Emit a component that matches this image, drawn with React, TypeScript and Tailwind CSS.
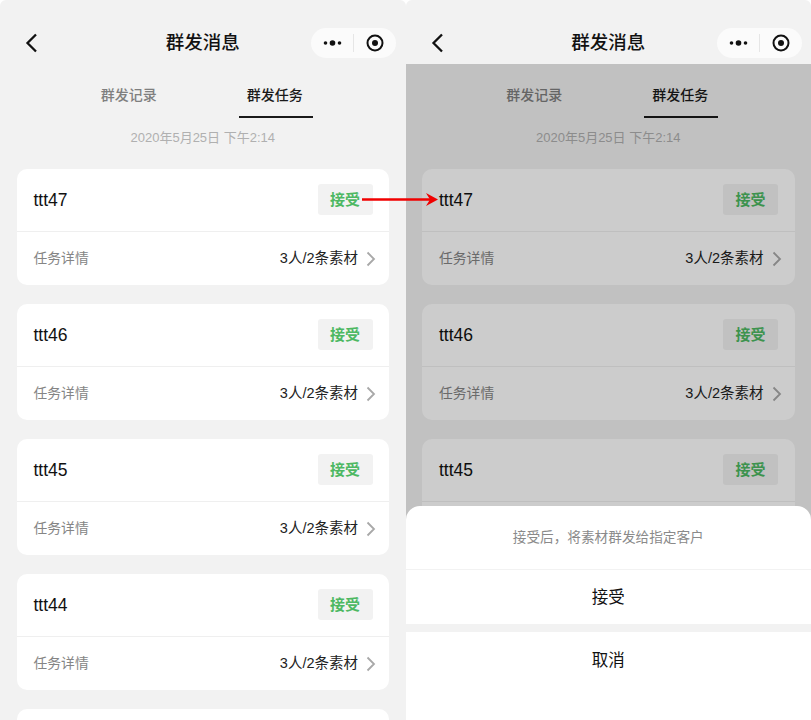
const tasks = ['ttt47', 'ttt46', 'ttt45', 'ttt44']

function TaskCard({ name }: { name: string }) {
  return (
    <div className="bg-white rounded-[10px] shrink-0 h-[116px] flex flex-col">
      <div className="h-[63px] border-b border-[#efefef] flex items-center justify-between pl-[17px] pr-[16.5px]">
        <span className="text-[17.5px] leading-[24px] text-[#111]">{name}</span>
        <span className="w-[55px] h-[31px] -mt-px pt-[2px] rounded-[3px] bg-[#f2f2f2] flex items-center justify-center text-[15px] font-semibold text-[#4db862]">
          接受
        </span>
      </div>
      <div className="flex-1 flex items-center justify-between pl-[17px] pr-[13px]">
        <span className="pt-[2px] text-[13.8px] text-[#858585]">任务详情</span>
        <span className="flex items-center text-[14.5px] text-[#222]">
          3人/2条素材
          <svg className="ml-[8px]" width="10" height="16" viewBox="0 0 10 16" fill="none">
            <path d="M1.5 1.5L8 8L1.5 14.5" stroke="#a8a8a8" strokeWidth="1.8" />
          </svg>
        </span>
      </div>
    </div>
  )
}

function Phone({ dimmed }: { dimmed?: boolean }) {
  return (
    <div className="relative w-[405.5px] h-[720px] shrink-0 bg-[#f2f2f2] overflow-hidden rounded-t-[6px]">
      {/* Nav bar */}
      <div className="relative h-[64px] flex items-end justify-center pb-[6px]">
        <svg className="absolute left-[25px] top-[33px]" width="14" height="20" viewBox="0 0 14 20" fill="none">
          <path d="M11 1.5L2.5 10L11 18.5" stroke="#111" strokeWidth="2.3" />
        </svg>
        <span className="h-[30px] flex items-center text-[18.5px] font-medium text-[#111]">群发消息</span>
        <div className="absolute left-[311px] top-[28px] w-[85px] h-[30px] rounded-full bg-[#fbfbfb] flex items-center">
          <svg className="ml-[12px]" width="20" height="8" viewBox="0 0 20 8" fill="#111">
            <circle cx="2.5" cy="4" r="1.8" />
            <circle cx="9.5" cy="4" r="2.8" />
            <circle cx="16.5" cy="4" r="1.8" />
          </svg>
          <div className="ml-[10px] w-px h-[18px] bg-[#e6e6e6]" />
          <svg className="ml-[12px]" width="18" height="18" viewBox="0 0 18 18">
            <circle cx="9" cy="9" r="7.5" fill="none" stroke="#111" strokeWidth="2" />
            <circle cx="9" cy="9" r="3" fill="#111" />
          </svg>
        </div>
      </div>

      {/* Tabs */}
      <div className="flex justify-center gap-[72px] h-[54px]">
        <div className="w-[74px] flex items-start justify-center pt-[21px] pr-[2px] text-[14px] font-medium text-[#7f7f7f]">
          群发记录
        </div>
        <div className="w-[74px] flex items-start justify-center pt-[21px] pr-[2px] text-[14px] font-medium text-[#1a1a1a] border-b-2 border-[#1a1a1a]">
          群发任务
        </div>
      </div>

      <div className="mt-[10px] text-center text-[13px] leading-[20px] text-[#b0b0b0]">2020年5月25日 下午2:14</div>

      <div className="mt-[21px] px-[16.5px] flex flex-col gap-[19px]">
        {tasks.map((name) => (
          <TaskCard key={name} name={name} />
        ))}
        {/* next card, only its top edge is on screen */}
        <div className="h-[116px] shrink-0 bg-white rounded-[10px]" />
      </div>

      {dimmed && (
        <>
          <div className="absolute inset-x-0 top-[64px] bottom-0 bg-black/20" />
          <div className="absolute inset-x-0 bottom-0 h-[214px] bg-white rounded-t-[14px] flex flex-col">
            <div className="h-[64px] pt-[2px] border-b border-[#f2f2f2] flex items-center justify-center text-[13.65px] text-[#8a8a8a]">
              接受后，将素材群发给指定客户
            </div>
            <div className="h-[54px] flex items-center justify-center text-[16.5px] text-[#111]">接受</div>
            <div className="h-[8px] bg-[#f2f2f2]" />
            <div className="h-[56px] flex items-center justify-center text-[16.5px] text-[#111]">取消</div>
          </div>
        </>
      )}
    </div>
  )
}

export default function App() {
  return (
    <div
      className="relative w-[811px] h-[720px] overflow-hidden bg-white flex"
      style={{ fontFamily: '"Liberation Sans", "Noto Sans CJK SC", sans-serif' }}
    >
      <Phone />
      <Phone dimmed />
      {/* Red annotation arrow */}
      <svg className="absolute left-[360px] top-[190px]" width="80" height="20" viewBox="0 0 80 20">
        <path d="M2 9.5H72" stroke="#f00000" strokeWidth="2.5" />
        <path d="M66 3L78 9.5L66 16L70 9.5Z" fill="#f00000" />
      </svg>
    </div>
  )
}
